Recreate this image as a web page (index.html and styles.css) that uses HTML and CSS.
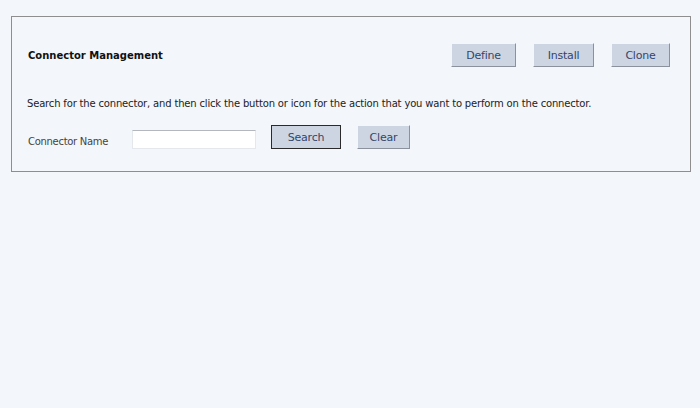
FILE: index.html
```html
<!DOCTYPE html>
<html>
<head>
<meta charset="utf-8">
<link rel="stylesheet" href="styles.css">
</head>
<body>
<div class="page">
  <section class="panel">
    <div class="header">
      <h1 class="title">Connector Management</h1>
      <div class="actions">
        <button class="btn btn-define">Define</button>
        <button class="btn btn-install">Install</button>
        <button class="btn btn-clone">Clone</button>
      </div>
    </div>
    <p class="desc">Search for the connector, and then click the button or icon for the action that you want to perform on the connector.</p>
    <div class="search-row">
      <label class="label" for="cn">Connector Name</label>
      <input class="input" id="cn" type="text">
      <button class="btn btn-search">Search</button>
      <button class="btn btn-clear">Clear</button>
    </div>
  </section>
</div>
</body>
</html>
```
FILE: styles.css
```css
html, body {
  margin: 0;
  padding: 0;
  background: #f3f6fa;
  width: 700px;
  height: 408px;
  overflow: hidden;
  font-family: "DejaVu Sans", sans-serif;
  font-size: 10px;
  color: #222;
}
.page {
  padding: 16px 9px 0 11px;
}
.panel {
  box-sizing: border-box;
  width: 680px;
  height: 156px;
  border: 1px solid #8e8e8e;
  padding: 26px 20px 0 16px;
}
.header {
  display: flex;
  justify-content: space-between;
  align-items: center;
  height: 24px;
}
.title {
  margin: 0;
  font-size: 10px;
  font-weight: bold;
  color: #111;
}
.actions {
  display: flex;
  gap: 18px;
}
.btn {
  box-sizing: border-box;
  height: 24px;
  padding: 0;
  font-family: inherit;
  font-size: 11px;
  letter-spacing: -0.2px;
  color: #34456a;
  background: #cdd5e3;
  border: 1px solid;
  border-color: #f4f6fa #8c929c #8c929c #f4f6fa;
}
.btn-define { width: 65px; }
.btn-install { width: 61px; margin-left: -1px; }
.btn-clone { width: 59px; margin-left: -1px; }
.desc {
  margin: 31px 0 0 -1px;
  font-size: 10px;
  letter-spacing: -0.17px;
  color: #222;
}
.search-row {
  display: flex;
  align-items: center;
  margin-top: 16px;
}
.label {
  width: 104px;
  color: #444;
  font-size: 10px;
  letter-spacing: -0.3px;
  padding-top: 8px;
}
.input {
  box-sizing: border-box;
  width: 124px;
  height: 19px;
  margin-top: 5px;
  background: #fff;
  border: 1px solid #e4e7ec;
  border-top-color: #b4b8be;
}
.btn-search {
  width: 70px;
  margin-left: 15px;
  border: 1px solid #2a2a2a;
  background: #cdd5e3;
}
.btn-clear {
  width: 53px;
  margin-left: 16px;
}
```
